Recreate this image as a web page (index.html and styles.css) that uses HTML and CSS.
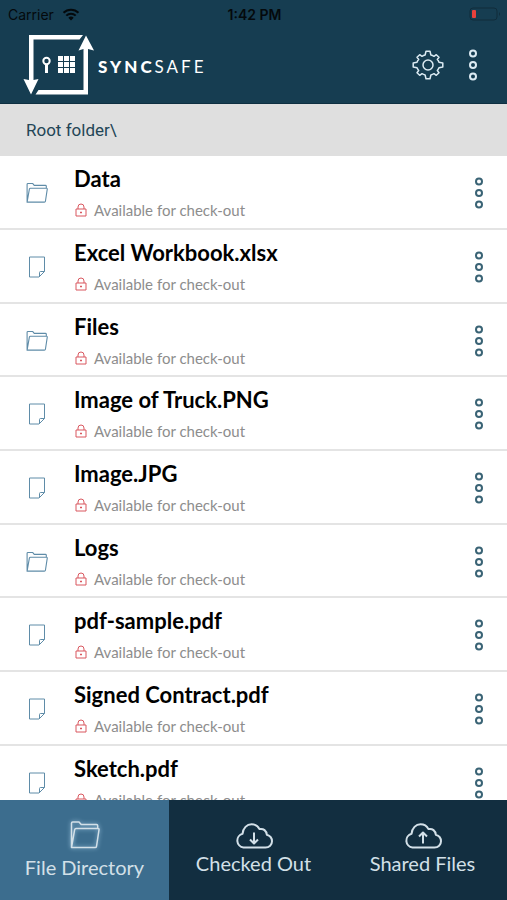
FILE: index.html
```html
<!DOCTYPE html>
<html lang="en">
<head>
  <meta charset="UTF-8">
  <meta name="viewport" content="width=device-width, initial-scale=1">
  <title>SyncSafe</title>
  <link rel="stylesheet" href="styles.css">
</head>
<body>

  <!-- shared icons -->
  <svg class="sprite" aria-hidden="true">
    <symbol id="folder" viewBox="0 0 30 28">
      <path d="M1.5 26.5V2.2Q1.5 1 2.7 1H9l2.2 2.6h15.3q1.2 0 1.2 1.2v2.7M1.5 26.5L4.6 8.8Q4.9 7.5 6 7.5h22q1.2 0 1 1.3l-2.5 16.5q-.2 1.2-1.4 1.2z"/>
    </symbol>
    <symbol id="file" viewBox="0 0 17 22">
      <path d="M1 1h15v14.5L10.5 21H1zM16 15.5h-4q-1 0-1 1V21"/>
    </symbol>
    <symbol id="lock" viewBox="0 0 12 14">
      <path d="M1 6h10v7H1zM3 6V4a3 3 0 0 1 6 0v2M6 8.5v2M5 9.5h2"/>
    </symbol>
    <symbol id="dots" viewBox="0 0 10 32">
      <circle cx="5" cy="4.5" r="3"/>
      <circle cx="5" cy="16" r="3"/>
      <circle cx="5" cy="27.5" r="3"/>
    </symbol>
    <symbol id="cloud" viewBox="0 0 38 26">
      <path d="M8.5 24.5A7 7 0 0 1 7.5 10.8C8 5 12 1.2 16.5 1.2c4 0 6.500 2 8 4.900 4-.8 7 1.600 7.300 5.600 3.200 1 5.200 3.500 5.200 6.500 0 3.600-2.800 6.300-6.500 6.300z"/>
    </symbol>
  </svg>

  <header class="header">
    <div class="status">
      <span class="carrier">Carrier
        <svg class="wifi" viewBox="0 0 18 13" aria-hidden="true">
          <path d="M1.500 4.800a10.500 10.500 0 0 1 15 0M4.300 7.600a6.600 6.600 0 0 1 9.400 0"/>
          <path class="wifi-dot" d="M6.300 9.700a4 4 0 0 1 5.400 0L9 12.500z"/>
        </svg>
      </span>
      <span class="time">1:42 PM</span>
      <svg class="battery" viewBox="0 0 32 14" aria-hidden="true">
        <rect class="battery-case" x="1" y="1" width="27" height="12" rx="3"/>
        <rect class="battery-level" x="3" y="3" width="4" height="8" rx="1"/>
        <path class="battery-tip" d="M30 5q2 2 0 4z"/>
      </svg>
    </div>
    <div class="toolbar">
      <svg class="logo" viewBox="0 0 72 62" aria-hidden="true">
        <path d="M6 46V1h54l-3.500 4.500H10.500V46l5-1L8 60.500.500 45zM12.500 60.500l3-4.500H60.500V15l-5 1.500L63 1.500l8 15L65 15v45.500z"/>
        <circle class="logo-key" cx="23.500" cy="27" r="3.200"/>
        <path d="M22 30h3v9h-3zM35 22h5v5h-5zM41 22h5v5h-5zM47 22h5v5h-5zM35 28h5v5h-5zM41 28h5v5h-5zM47 28h5v5h-5zM35 34h5v5h-5zM41 34h5v5h-5zM47 34h5v5h-5z"/>
      </svg>
      <h1 class="brand"><b>SYNC</b>SAFE</h1>
      <button class="icon-button" type="button" aria-label="Settings">
        <svg class="gear" viewBox="-16 -15 32 30">
          <path d="M14.800-2V2L11 2.800Q10.400 4.400 9.300 5.500L11 7.800 8.300 10.300 6 8.700Q4.600 9.600 2.900 10L2 13.700H-2L-2.900 10Q-4.600 9.600-6 8.700L-8.300 10.300-11 7.800-9.300 5.500Q-10.400 4.400-11 2.800L-14.800 2V-2L-11-2.800Q-10.400-4.400-9.300-5.500L-11-7.800-8.300-10.300-6-8.700Q-4.600-9.600-2.900-10L-2-13.700H2L2.900-10Q4.600-9.600 6-8.700L8.300-10.300 11-7.800 9.300-5.500Q10.400-4.400 11-2.800z"/>
          <circle r="5"/>
        </svg>
      </button>
      <button class="icon-button" type="button" aria-label="Menu">
        <svg class="dots"><use href="#dots"/></svg>
      </button>
    </div>
  </header>

  <div class="path">Root folder\</div>

  <main class="files">
    <ul class="file-list">
      <li class="row">
        <svg class="type folder"><use href="#folder"/></svg>
        <div class="info">
          <h2 class="name">Data</h2>
          <p class="state"><svg class="lock"><use href="#lock"/></svg>Available for check-out</p>
        </div>
        <button class="more" type="button" aria-label="Options for Data"><svg class="dots"><use href="#dots"/></svg></button>
      </li>
      <li class="row">
        <svg class="type"><use href="#file"/></svg>
        <div class="info">
          <h2 class="name">Excel Workbook.xlsx</h2>
          <p class="state"><svg class="lock"><use href="#lock"/></svg>Available for check-out</p>
        </div>
        <button class="more" type="button" aria-label="Options for Excel Workbook.xlsx"><svg class="dots"><use href="#dots"/></svg></button>
      </li>
      <li class="row">
        <svg class="type folder"><use href="#folder"/></svg>
        <div class="info">
          <h2 class="name">Files</h2>
          <p class="state"><svg class="lock"><use href="#lock"/></svg>Available for check-out</p>
        </div>
        <button class="more" type="button" aria-label="Options for Files"><svg class="dots"><use href="#dots"/></svg></button>
      </li>
      <li class="row">
        <svg class="type"><use href="#file"/></svg>
        <div class="info">
          <h2 class="name">Image of Truck.PNG</h2>
          <p class="state"><svg class="lock"><use href="#lock"/></svg>Available for check-out</p>
        </div>
        <button class="more" type="button" aria-label="Options for Image of Truck.PNG"><svg class="dots"><use href="#dots"/></svg></button>
      </li>
      <li class="row">
        <svg class="type"><use href="#file"/></svg>
        <div class="info">
          <h2 class="name">Image.JPG</h2>
          <p class="state"><svg class="lock"><use href="#lock"/></svg>Available for check-out</p>
        </div>
        <button class="more" type="button" aria-label="Options for Image.JPG"><svg class="dots"><use href="#dots"/></svg></button>
      </li>
      <li class="row">
        <svg class="type folder"><use href="#folder"/></svg>
        <div class="info">
          <h2 class="name">Logs</h2>
          <p class="state"><svg class="lock"><use href="#lock"/></svg>Available for check-out</p>
        </div>
        <button class="more" type="button" aria-label="Options for Logs"><svg class="dots"><use href="#dots"/></svg></button>
      </li>
      <li class="row">
        <svg class="type"><use href="#file"/></svg>
        <div class="info">
          <h2 class="name">pdf-sample.pdf</h2>
          <p class="state"><svg class="lock"><use href="#lock"/></svg>Available for check-out</p>
        </div>
        <button class="more" type="button" aria-label="Options for pdf-sample.pdf"><svg class="dots"><use href="#dots"/></svg></button>
      </li>
      <li class="row">
        <svg class="type"><use href="#file"/></svg>
        <div class="info">
          <h2 class="name">Signed Contract.pdf</h2>
          <p class="state"><svg class="lock"><use href="#lock"/></svg>Available for check-out</p>
        </div>
        <button class="more" type="button" aria-label="Options for Signed Contract.pdf"><svg class="dots"><use href="#dots"/></svg></button>
      </li>
      <li class="row">
        <svg class="type"><use href="#file"/></svg>
        <div class="info">
          <h2 class="name">Sketch.pdf</h2>
          <p class="state"><svg class="lock"><use href="#lock"/></svg>Available for check-out</p>
        </div>
        <button class="more" type="button" aria-label="Options for Sketch.pdf"><svg class="dots"><use href="#dots"/></svg></button>
      </li>
    </ul>
  </main>

  <nav class="tabs">
    <a class="tab active" href="#directory">
      <svg class="tab-folder"><use href="#folder"/></svg>
      File Directory
    </a>
    <a class="tab" href="#checked-out">
      <svg class="tab-cloud" viewBox="0 0 38 26"><use href="#cloud"/><path d="M19 9.500v11M15 16.500l4 4 4-4"/></svg>
      Checked Out
    </a>
    <a class="tab" href="#shared">
      <svg class="tab-cloud" viewBox="0 0 38 26"><use href="#cloud"/><path d="M19 20.500v-11M15 13.500l4-4 4 4"/></svg>
      Shared Files
    </a>
  </nav>

</body>
</html>
```
FILE: styles.css
```css
* {
  box-sizing: border-box;
}

body {
  margin: 0;
  height: 100vh;
  display: flex;
  flex-direction: column;
  font-family: Lato, "Open Sans", sans-serif;
  background: #fff;
  color: #000;
}

svg {
  display: block;
  flex: none;
  fill: none;
  stroke: currentColor;
  stroke-linejoin: round;
}

.sprite {
  position: absolute;
  width: 0;
  height: 0;
}

button {
  padding: 0;
  border: 0;
  background: none;
  color: inherit;
  cursor: pointer;
}

/* Header */
.header {
  flex: none;
  background: #163d51;
  border-bottom: 1px solid #0e2f41;
  color: #fff;
}

.status {
  display: grid;
  grid-template-columns: 1fr auto 1fr;
  align-items: center;
  height: 28px;
  padding: 0 6px 0 8px;
  font-family: Inter, sans-serif;
  font-size: 14px;
  color: #04090c;
}

.carrier {
  display: flex;
  align-items: center;
  gap: 8px;
}

.wifi {
  width: 18px;
  height: 13px;
  stroke-width: 2;
}

.wifi-dot {
  fill: currentColor;
  stroke: none;
}

.time {
  font-weight: 600;
}

.battery {
  justify-self: end;
  width: 32px;
  height: 14px;
}

.battery-case {
  stroke: #102c3b;
}

.battery-level {
  fill: #e8413c;
  stroke: none;
}

.battery-tip {
  fill: #102c3b;
  stroke: none;
}

.toolbar {
  display: flex;
  align-items: center;
  height: 75px;
  padding: 0 29px 2px 23px;
}

.logo {
  width: 72px;
  height: 62px;
  fill: #fff;
  stroke: none;
}

.logo-key {
  fill: none;
  stroke: #fff;
  stroke-width: 2;
}

.brand {
  flex: 1;
  margin: 4px 0 0 3px;
  font-size: 17px;
  font-weight: 400;
  letter-spacing: 3px;
}

.brand b {
  font-weight: 900;
}

.icon-button {
  margin-left: 24px;
  color: #dcebf3;
}

.gear {
  width: 32px;
  height: 30px;
  stroke-width: 1.5;
}

.dots {
  width: 10px;
  height: 32px;
  stroke-width: 2;
}

/* Current folder */
.path {
  flex: none;
  padding: 0 26px;
  background: #dfdfdf;
  color: #234556;
  font-family: Roboto, sans-serif;
  font-size: 17px;
  line-height: 52px;
}

/* File list */
.files {
  flex: 1;
  min-height: 0;
  overflow: hidden;
}

.file-list {
  display: grid;
  grid-auto-rows: 74px 74px 73px;
  margin: 0;
  padding: 0;
  list-style: none;
}

.row {
  display: flex;
  align-items: center;
  padding: 2px 23px 0 26px;
  border-bottom: 2px solid #e4e4e4;
}

.type {
  width: 22px;
  height: 22px;
  color: #5f8ca8;
  stroke-width: 1;
}

.folder {
  stroke-width: 1.5;
}

.info {
  flex: 1;
  min-width: 0;
  margin-left: 26px;
}

.name {
  margin: 0 0 8px;
  font-size: 22px;
  font-weight: 700;
  line-height: 26px;
}

.state {
  display: flex;
  align-items: center;
  gap: 6px;
  margin: 0;
  font-size: 15px;
  line-height: 20px;
  color: #8d8d8d;
}

.lock {
  width: 14px;
  height: 14px;
  color: #d9575f;
}

.more {
  color: #3a6375;
}

/* Bottom tabs */
.tabs {
  flex: none;
  display: grid;
  grid-template-columns: repeat(3, 1fr);
  height: 100px;
}

.tab {
  display: flex;
  flex-direction: column;
  align-items: center;
  justify-content: center;
  gap: 2px;
  padding-bottom: 2px;
  background: #122e40;
  color: #d3e0e8;
  font-size: 20px;
  line-height: 24px;
  text-decoration: none;
}

.active {
  gap: 6px;
  padding-bottom: 0;
  background: #3c6d8e;
}

.tab-folder {
  width: 32px;
  height: 28px;
  stroke-width: 1.5;
  filter: drop-shadow(0 0 2px #9cc4de);
}

.tab-cloud {
  width: 38px;
  height: 26px;
  stroke-width: 2;
}
```
